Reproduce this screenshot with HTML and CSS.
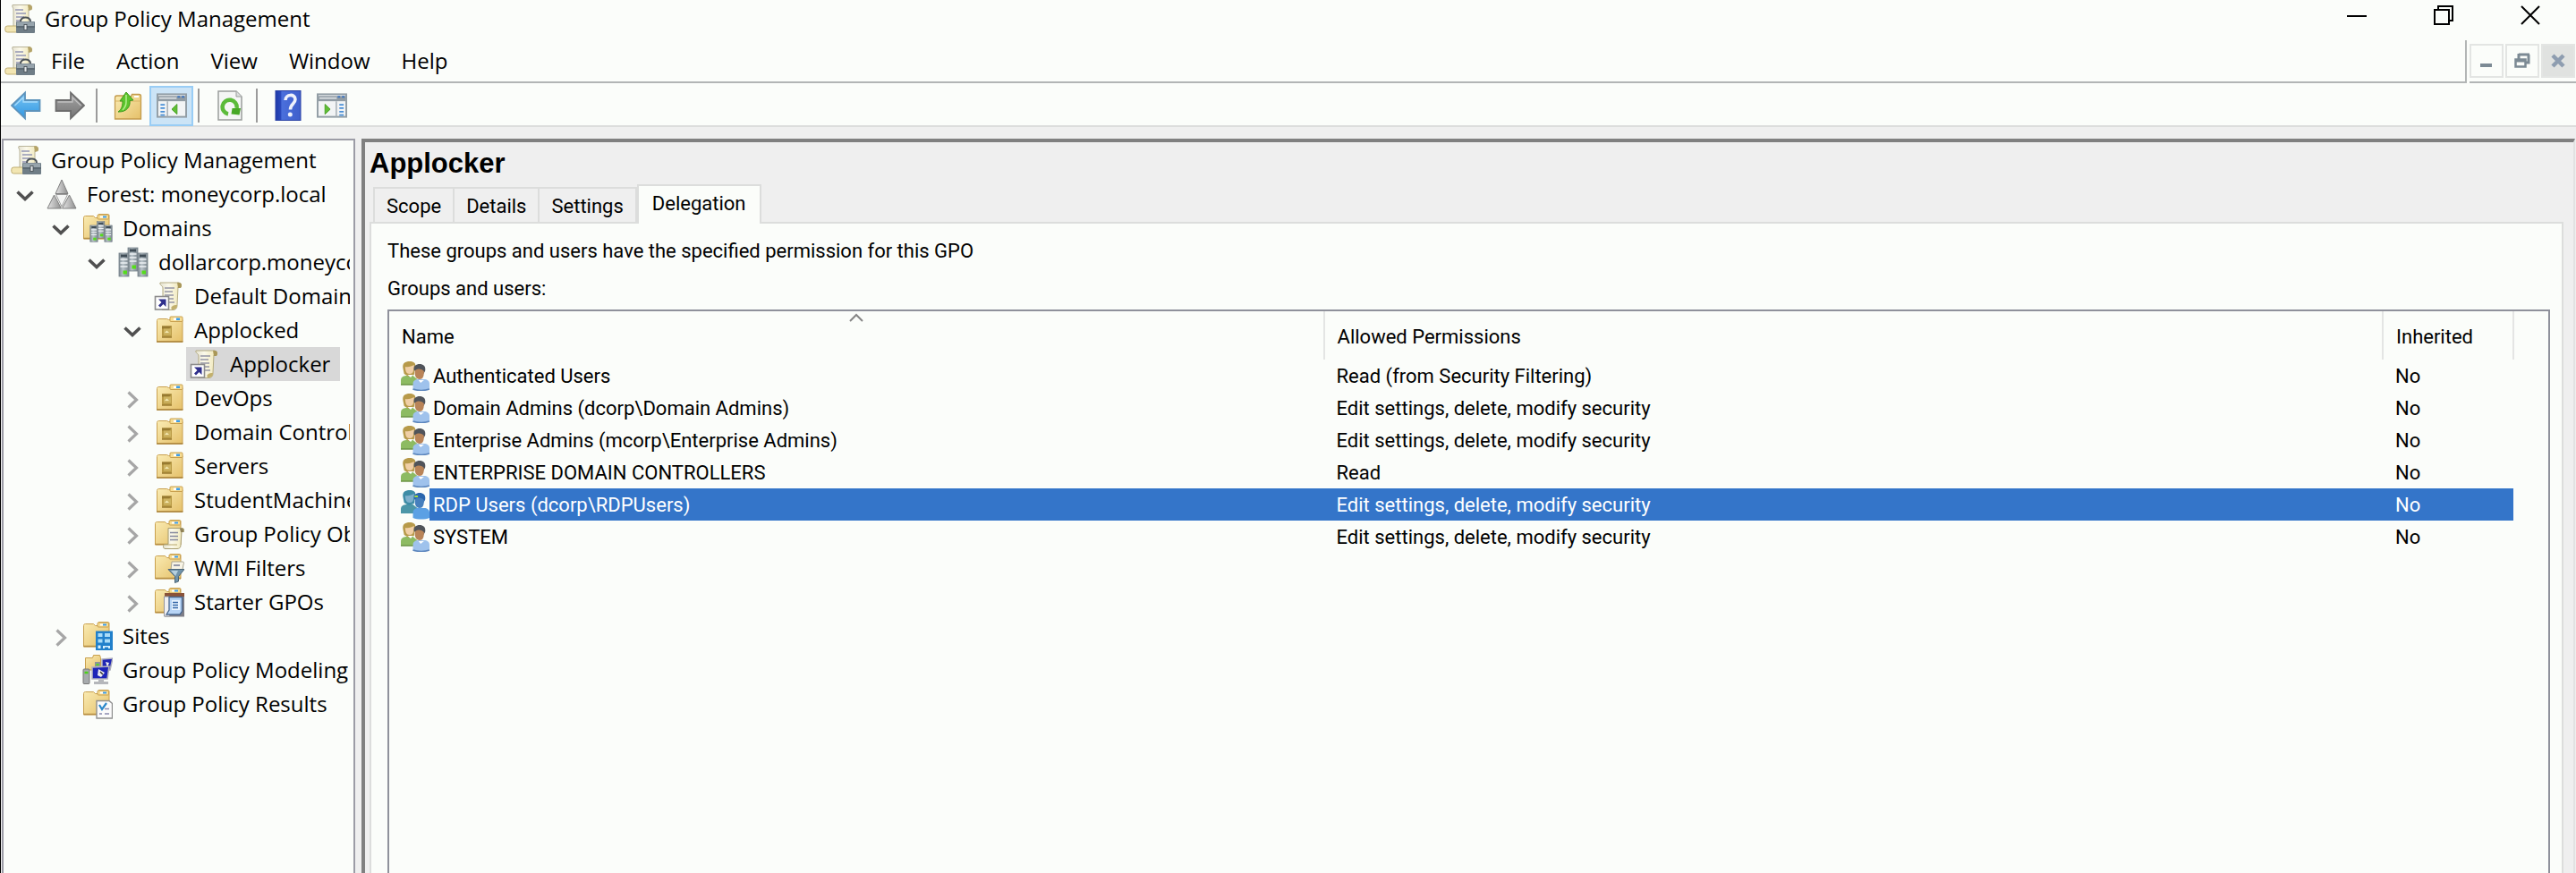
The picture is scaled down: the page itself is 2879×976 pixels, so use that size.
FILE: index.html
```html
<!DOCTYPE html>
<html lang="en">
<head>
<meta charset="utf-8">
<title>Group Policy Management</title>
<link rel="stylesheet" href="styles.css">
</head>
<body>
<svg class="defs" width="0" height="0" aria-hidden="true">
  <defs>
    <linearGradient id="gFolder" x1="0" y1="0" x2="1" y2="1"><stop offset="0" stop-color="#faecb4"/><stop offset="1" stop-color="#e5c069"/></linearGradient>
    <linearGradient id="gPaper" x1="0" y1="0" x2="1" y2="0"><stop offset="0" stop-color="#e6e3d2"/><stop offset=".4" stop-color="#fbf9ea"/><stop offset="1" stop-color="#efe6b4"/></linearGradient>
    <linearGradient id="gServer" x1="0" y1="0" x2="1" y2="0"><stop offset="0" stop-color="#7f8b92"/><stop offset=".4" stop-color="#b9c3c9"/><stop offset="1" stop-color="#7c878e"/></linearGradient>
    <linearGradient id="gBlue" x1="0" y1="0" x2="0" y2="1"><stop offset="0" stop-color="#7cc5f4"/><stop offset="1" stop-color="#2f97e2"/></linearGradient>
    <linearGradient id="gGray" x1="0" y1="0" x2="0" y2="1"><stop offset="0" stop-color="#a5a5a5"/><stop offset="1" stop-color="#747474"/></linearGradient>
    <linearGradient id="gHelp" x1="0" y1="0" x2="1" y2="0"><stop offset="0" stop-color="#1f3aa8"/><stop offset=".2" stop-color="#2a49bd"/><stop offset=".25" stop-color="#4a6fdc"/><stop offset="1" stop-color="#3f5fcb"/></linearGradient>
    <linearGradient id="gTri" x1="0" y1="0" x2="1" y2="0"><stop offset="0" stop-color="#e4e4e4"/><stop offset="1" stop-color="#8f8f8f"/></linearGradient>
  </defs>

  <symbol id="i-console" viewBox="0 0 34 34">
    <path d="M9 1.500h18c3 0 4 2 3 4.500h-3v23H10V7C10 4 8 4 9 1.500z" fill="url(#gPaper)" stroke="#b9b49a"/>
    <path d="M26 1.500c4-1 6 2 4.500 5.500L27 8z" fill="#b5a468"/>
    <path d="M12 7h9M13 11h11M13 15h9M13 19h6" stroke="#9395b4" stroke-width="1.600"/>
    <rect x=".8" y="25" width="16" height="7" rx="2.500" fill="#f2e6b2" stroke="#bfae72"/>
    <path d="M18 20c0-6 11-6 11 0" fill="none" stroke="#4b5257" stroke-width="2"/>
    <rect x="13" y="20" width="21" height="13" rx="1" fill="#6f7d86"/>
    <rect x="14" y="20.500" width="19" height="4.500" fill="#97a4ac"/>
    <path d="M13 26h21" stroke="#4c5860"/>
    <rect x="22" y="23.500" width="3" height="6" fill="#e2e6e8" stroke="#40484e" stroke-width=".8"/>
  </symbol>
  <symbol id="i-forest" viewBox="0 0 34 34">
    <path d="M17 1l7 15.500H10z" fill="url(#gTri)" stroke="#808080"/>
    <path d="M8.500 18l8 15H1z" fill="url(#gTri)" stroke="#808080"/>
    <path d="M25.500 18L33 33H17.500z" fill="url(#gTri)" stroke="#808080"/>
    <path d="M10.500 17.500h13L17 31z" fill="#f4f5f4" stroke="#9a9a9a"/>
  </symbol>
  <symbol id="i-folder" viewBox="0 0 34 34">
    <path d="M1.500 5.500c0-1.500 1-2 2-2h9l2 2h3V3c0-1 .7-1.500 1.500-1.500h9.500c1 0 1.500.7 1.500 1.500v26H1.500z" fill="url(#gFolder)" stroke="#c9a04e"/>
    <rect x="17" y="2" width="12.500" height="5" rx="1" fill="#f7dd93" stroke="#c9a04e"/>
    <rect x="20" y="3.500" width="7" height="2" fill="#fff"/><rect x="23" y="3.500" width="4" height="2" fill="#3c9ce6"/>
    <path d="M1.500 28.500h28.500" stroke="#b78f42" stroke-width="1.500"/>
  </symbol>
  <symbol id="i-ou" viewBox="0 0 34 34">
    <path d="M3.500 6.500c0-1.500 1-2 2-2h9l2 1h15.500v24.500H3.500z" fill="url(#gFolder)" stroke="#c9a04e"/>
    <rect x="18" y="2" width="14" height="5.500" rx="1" fill="#f7dd93" stroke="#c9a04e"/>
    <rect x="22" y="3.500" width="7" height="2.500" fill="#fff"/><rect x="25" y="3.500" width="4" height="2.500" fill="#3c9ce6"/>
    <path d="M3 30h29.500" stroke="#a98238" stroke-width="1.500"/>
    <rect x="9" y="12.500" width="11" height="13" fill="#b99a45"/>
    <path d="M9 12.500h11l-3 3h-8z" fill="#977a30"/>
    <rect x="11" y="15.500" width="8" height="7" fill="#cdb361"/>
    <path d="M12 20l2.500-2.500L17 20z" fill="#f4eab4"/><path d="M9 25h11" stroke="#8b6d27"/>
  </symbol>
  <symbol id="i-servers" viewBox="0 0 34 34">
    <g id="srv3">
      <g id="srv"><rect x="11" y="1" width="11" height="26" fill="url(#gServer)" stroke="#76828a" stroke-width=".8"/><rect x="13" y="2.500" width="7" height="3" fill="#3f4c55"/><path d="M12.500 8h8M12.500 12h8M12.500 16h8" stroke="#edf1f3" stroke-width="1.500"/><rect x="15.500" y="20.500" width="4.500" height="4" fill="#55dc1b"/></g>
      <use href="#srv" x="-10" y="6"/>
      <use href="#srv" x="11" y="6"/>
    </g>
  </symbol>
  <symbol id="i-domains" viewBox="0 0 34 34">
    <use href="#i-folder" width="34" height="34"/>
    <svg x="8" y="9" width="26" height="24" viewBox="0 0 34 34" preserveAspectRatio="none"><use href="#srv3"/></svg>
  </symbol>
  <symbol id="i-scroll" viewBox="0 0 34 34">
    <path d="M7 2h19c4 0 5 2 4 5h-3l-1 20c0 4-2 5.500-5 5.500H9c3-2 1-6 1-9V8C10 5 6 5 7 2z" fill="url(#gPaper)" stroke="#b4ab82"/>
    <path d="M26 2c5-1 6 3 4 6h-3z" fill="#a99758"/>
    <path d="M20 32c-2-3 1-5 6-5 0 4-2 5.500-6 5z" fill="#c2b06d"/>
    <path d="M12 8h11M12 12h9M12 16h10M14 20h8M17 24h6" stroke="#9494a4" stroke-width="1.700"/>
  </symbol>
  <symbol id="i-gpo" viewBox="0 0 34 34">
    <use href="#i-scroll" width="34" height="34"/>
    <rect x="1.500" y="17.500" width="15" height="14.500" fill="#fff" stroke="#8c8c8c" stroke-width="1.600"/>
    <path d="M5 20.500h8.500V29l-3-3-3.500 3.500-2-2L8.500 24z" fill="#2f2f8c"/>
  </symbol>
  <symbol id="i-gpobjects" viewBox="0 0 34 34">
    <use href="#i-folder" width="34" height="34"/>
    <path d="M16 10.500h15c3 0 3 2 2.500 4H31l-1 15c0 3-2 4-4 4H12c-2-1-2-4 0-5h4z" fill="url(#gPaper)" stroke="#a69c70"/>
    <path d="M29 11c4-1 5 1 4 4h-3z" fill="#8f8258"/>
    <path d="M18 15.500h9M18 19.500h9M18 23.500h9" stroke="#85889d" stroke-width="1.700"/><path d="M12 29h14" stroke="#b8a86c"/>
  </symbol>
  <symbol id="i-wmi" viewBox="0 0 34 34">
    <use href="#i-folder" width="34" height="34"/>
    <path d="M20 10h12c2 0 2 2 1 3l-1 6H19z" fill="#f7f4e6" stroke="#aaa692"/><path d="M22 14h7" stroke="#85889d" stroke-width="1.700"/>
    <path d="M16 18.500h18l-6.500 8V32l-4 1.500v-7z" fill="#6f93aa" stroke="#4b6577"/><path d="M19 20h8l-3 6z" fill="#b5d0df"/>
  </symbol>
  <symbol id="i-starter" viewBox="0 0 34 34">
    <use href="#i-folder" width="34" height="34"/>
    <path d="M12 7h22v26.500H12z" fill="#7e7e86"/><path d="M12 7h22v4H12z" fill="#8a5238"/>
    <path d="M11.500 11h6v22h-6z" fill="#f0f0f2" stroke="#96969c"/>
    <path d="M17 11.500h14.500v16L29 31H14l3-5z" fill="#b7d4f5" stroke="#49678f" stroke-width="1.300"/>
    <rect x="20" y="15" width="9" height="11" fill="#eaf4ff"/><path d="M21 17.500h6M21 20.500h6M21 23.500h6" stroke="#3567a8" stroke-width="1.500"/>
  </symbol>
  <symbol id="i-sites" viewBox="0 0 34 34">
    <use href="#i-folder" width="34" height="34"/>
    <rect x="15" y="11.500" width="19" height="21.500" fill="#2180cb"/>
    <path d="M17.500 14h5v4h-5zM25 14h6v4h-6zM17.500 20.500h5v4h-5zM25 20.500h6v4h-6z" fill="#aadcf8"/><path d="M17.500 27.500h3V31h-3zM23 28h8v3h-2v-1.500h-4V31h-2z" fill="#d9f1ff"/>
  </symbol>
  <symbol id="i-modeling" viewBox="0 0 34 34">
    <path d="M3.500 3.500h8l1-3h7l1 3V17h-17z" fill="url(#gFolder)" stroke="#c9a04e"/>
    <path d="M22 5l12-1-3 13-9 1z" fill="#2026b5" stroke="#b0b0bc" stroke-width="1.500"/>
    <path d="M26 8l4 1-2 5z" fill="#eee"/><path d="M14 8h6v7h-6z" fill="#8c9499"/><path d="M15.500 10h3v2h-3z" fill="#55dc1b"/>
    <path d="M11 14l19-1-2 14H11z" fill="#1d24b8" stroke="#b4b4bd" stroke-width="1.600"/>
    <path d="M18 16l7 4-4 5-4-2z" fill="#ececf2"/><path d="M20 19l3 3" stroke="#333" stroke-width="1.500"/>
    <path d="M18 28h6v2h5v3H13v-3h5z" fill="#b5b7bb"/>
    <rect x="1" y="16" width="7" height="16.500" rx="1" fill="#a7abad" stroke="#777"/><path d="M2.500 20h4" stroke="#4cd21a" stroke-width="2.500"/>
  </symbol>
  <symbol id="i-results" viewBox="0 0 34 34">
    <use href="#i-folder" width="34" height="34"/>
    <path d="M16 13.500h14l3.500 3V33H16z" fill="#fbfbfb" stroke="#8f8f8f" stroke-width="1.400"/>
    <path d="M19 18l3 5 5-7" fill="none" stroke="#2b87c9" stroke-width="2.200"/><path d="M25 22.500h5M19 28h3M25 28h5" stroke="#8a8ab0" stroke-width="1.700"/>
  </symbol>

  <symbol id="i-back" viewBox="0 0 34 32">
    <path d="M1 16L16 1.500V10h16.500v12H16v8.500z" fill="url(#gBlue)" stroke="#5d93bb" stroke-width="1.800"/>
    <path d="M4.500 16L14 7v5h16" fill="none" stroke="#a9dcfa" stroke-width="1.300"/>
  </symbol>
  <symbol id="i-forward" viewBox="0 0 34 32">
    <path d="M33 16L18 1.500V10H1.500v12H18v8.500z" fill="url(#gGray)" stroke="#6d6d6d" stroke-width="1.800"/>
    <path d="M3.500 12H20V7l9.500 9" fill="none" stroke="#c0c0c0" stroke-width="1.300"/>
  </symbol>
  <symbol id="i-up" viewBox="0 0 34 34">
    <path d="M2.500 8.500c0-2 1-2.500 2-2.500h8l2 1h6l1-2.500h8c1.500 0 2 .8 2 2V32h-29z" fill="url(#gFolder)" stroke="#c39b4c" stroke-width="1.300"/>
    <path d="M2.500 12h29" stroke="#d9b465"/><path d="M24 7h5" stroke="#fff" stroke-width="2"/>
    <path d="M6 24c3-2 5-5 5-12H8l7-10 8 9-4 .5c1 6-3 13-13 12.500z" fill="#5cc52c" stroke="#3f9a1d"/><path d="M15 5v8c0 4-2 7-4 9" stroke="#b5ee8e" stroke-width="1.500" fill="none"/>
  </symbol>
  <symbol id="i-tree-pane" viewBox="0 0 35 28">
    <rect x="1" y="1" width="33" height="26" fill="#f2f4f5" stroke="#929da5" stroke-width="2"/>
    <path d="M2 3h31v6H2z" fill="#919ca4"/><path d="M3 5.500h20" stroke="#e4e8ea" stroke-width="1.500"/><path d="M24 3h3v2h-3zM29 3h3v2h-3z" fill="#3e74bd"/>
    <path d="M12.500 9v18" stroke="#a3acb2" stroke-width="1.500"/>
    <path d="M4.500 13h5M4.500 17h5M4.500 21h5M4.500 25h5" stroke="#4a8fd6" stroke-width="1.800"/>
    <path d="M23.500 12.500v11.500L17.500 18.300z" fill="#5fbf35" stroke="#479f24"/>
  </symbol>
  <symbol id="i-action-pane" viewBox="0 0 35 28">
    <rect x="1" y="1" width="33" height="26" fill="#f2f4f5" stroke="#929da5" stroke-width="2"/>
    <path d="M2 3h31v6H2z" fill="#919ca4"/><path d="M3 5.500h20" stroke="#e4e8ea" stroke-width="1.500"/><path d="M24 3h3v2h-3zM29 3h3v2h-3z" fill="#3e74bd"/>
    <path d="M22.500 9v18" stroke="#a3acb2" stroke-width="1.500"/>
    <path d="M26 13h5M26 17h5M26 21h5M26 25h5" stroke="#4a8fd6" stroke-width="1.800"/>
    <path d="M9.500 12.500v11.500l6-5.700z" fill="#5fbf35" stroke="#479f24"/>
  </symbol>
  <symbol id="i-refresh" viewBox="0 0 28 34">
    <path d="M1 1h20l6 6v26H1z" fill="#f5f6f5" stroke="#9a9d9c" stroke-width="1.500"/><path d="M21 1v6h6" fill="#dcdfde" stroke="#9a9d9c"/>
    <path d="M12 26.500A8 8 0 1 1 21.500 20" fill="none" stroke="#5cbb3a" stroke-width="4.500"/>
    <path d="M16.500 20h9.500l-1.500 7.500-9-1z" fill="#48a827"/>
  </symbol>
  <symbol id="i-help" viewBox="0 0 29 34">
    <rect x=".5" y=".5" width="28" height="33" fill="url(#gHelp)" stroke="#2a41a5"/>
    <path d="M11.500 11c0-7 11-7.500 11-1 0 5-5.500 5-5.500 11.500" fill="none" stroke="#eef1fb" stroke-width="3.600"/><circle cx="16.800" cy="27" r="2.500" fill="#eef1fb"/>
  </symbol>

  <symbol id="i-users" viewBox="0 0 26 34" preserveAspectRatio="none">
    <path d="M0 27v-5c0-4 3-5 6-5h5l4 4v6z" fill="#8dbb62"/><path d="M0 27h14" stroke="#6c9547" stroke-width="1.500"/>
    <path d="M2 9c-1-6 2-8 6-8s6 2 5 7l-1 8-5 2-4-3z" fill="#b79a4a"/>
    <path d="M4 7c3 1 6-1 8-2 0 7-1 10-4 10S4 12 4 7z" fill="#f0cfa6"/><path d="M6 16l3 3 2-3z" fill="#fff"/>
    <path d="M11 32v-6c0-3 2-5 5-5h5c3 0 5 2 5 5v6c-4 2-11 2-15 0z" fill="#9fc2ec"/><path d="M11 32c4 2 11 2 15 0" fill="none" stroke="#5c86bd" stroke-width="1.500"/>
    <path d="M12 11c-1-5 2-7 5-7s6 2 5 8l-2 4z" fill="#50545a"/>
    <path d="M13 11c3-2 5-2 8 1 0 6-1 9-4 9s-5-4-4-10z" fill="#b98458"/><path d="M16 22l2 3 3-3z" fill="#fff"/>
  </symbol>
  <symbol id="i-users-selected" viewBox="0 0 26 34" preserveAspectRatio="none">
    <path d="M0 27v-5c0-4 3-5 6-5h5l4 4v6z" fill="#4c96a8"/>
    <path d="M2 9c-1-6 2-8 6-8s6 2 5 7l-1 8-5 2-4-3z" fill="#3e8ca6"/>
    <path d="M4 7c3 1 6-1 8-2 0 7-1 10-4 10S4 12 4 7z" fill="#7fb0cc"/>
    <path d="M11 32v-6c0-3 2-5 5-5h5c3 0 5 2 5 5v6c-4 2-11 2-15 0z" fill="#5ba0e4"/>
    <path d="M12 11c-1-5 2-7 5-7s6 2 5 8l-2 4z" fill="#2a66ae"/>
    <path d="M13 11c3-2 5-2 8 1 0 6-1 9-4 9s-5-4-4-10z" fill="#467fbd"/><path d="M12.500 7h3v2h-3z" fill="#a6df3c"/>
  </symbol>
  <symbol id="i-open" viewBox="0 0 20 20"><path d="M1.500 5.500l8.500 8 8.500-8" fill="none" stroke="#505050" stroke-width="3.600"/></symbol>
  <symbol id="i-closed" viewBox="0 0 20 20"><path d="M5.500 1.500l9 8.500-9 8.500" fill="none" stroke="#a6a6a6" stroke-width="3.200"/></symbol>
</svg>

<div class="window">
  <header class="titlebar">
    <svg class="icon"><use href="#i-console"/></svg>
    <h1 class="titlebar-text">Group Policy Management</h1>
    <div class="caption-buttons">
      <button class="caption-button" aria-label="Minimize"><svg viewBox="0 0 22 22"><path d="M0 12h22" stroke="#000" stroke-width="2"/></svg></button>
      <button class="caption-button" aria-label="Restore"><svg viewBox="0 0 22 22"><path d="M5 5V1h16v16h-4M1 5h16v16H1z" fill="none" stroke="#000" stroke-width="2"/></svg></button>
      <button class="caption-button" aria-label="Close"><svg viewBox="0 0 22 22"><path d="M1 1l20 20M21 1L1 21" stroke="#000" stroke-width="2"/></svg></button>
    </div>
  </header>

  <div class="menubar">
    <div class="menus">
      <svg class="icon"><use href="#i-console"/></svg>
      <button class="menu">File</button>
      <button class="menu">Action</button>
      <button class="menu">View</button>
      <button class="menu">Window</button>
      <button class="menu">Help</button>
    </div>
    <div class="child-buttons">
      <button class="child-button" aria-label="Minimize child window"><svg viewBox="0 0 20 20"><path d="M3 15h13" stroke="#7c8a94" stroke-width="4"/></svg></button>
      <button class="child-button" aria-label="Restore child window"><svg viewBox="0 0 20 20"><path d="M6 3h12M17 3v9h-3M6 2v6" fill="none" stroke="#7c8a94" stroke-width="3"/><path d="M2.500 8.500h11v8h-11z" fill="#fbfdfa" stroke="#7c8a94" stroke-width="2.500"/><path d="M2 10h12" stroke="#7c8a94" stroke-width="3"/></svg></button>
      <button class="child-button child-button-close" aria-label="Close child window"><svg viewBox="0 0 20 20"><path d="M4 4l12 12M16 4L4 16" stroke="#8e9db0" stroke-width="4.500"/></svg></button>
    </div>
  </div>

  <div class="toolbar">
    <button class="tool" aria-label="Back"><svg class="icon"><use href="#i-back"/></svg></button>
    <button class="tool" aria-label="Forward"><svg class="icon"><use href="#i-forward"/></svg></button>
    <span class="separator"></span>
    <button class="tool" aria-label="Up one level"><svg class="icon"><use href="#i-up"/></svg></button>
    <button class="tool tool-active" aria-label="Show console tree" aria-pressed="true"><svg class="icon"><use href="#i-tree-pane"/></svg></button>
    <span class="separator"></span>
    <button class="tool" aria-label="Refresh"><svg class="icon"><use href="#i-refresh"/></svg></button>
    <span class="separator"></span>
    <button class="tool" aria-label="Help topics"><svg class="icon"><use href="#i-help"/></svg></button>
    <button class="tool" aria-label="Show action pane"><svg class="icon"><use href="#i-action-pane"/></svg></button>
  </div>

  <div class="workspace">
    <nav class="tree" aria-label="Console tree">
      <div class="node root"><svg class="icon"><use href="#i-console"/></svg><span>Group Policy Management</span></div>
      <ul class="branches">
        <li>
          <div class="node"><button class="toggle" aria-label="Collapse forest"><svg><use href="#i-open"/></svg></button><svg class="icon"><use href="#i-forest"/></svg><span>Forest: moneycorp.local</span></div>
          <ul>
            <li>
              <div class="node"><button class="toggle" aria-label="Collapse domains"><svg><use href="#i-open"/></svg></button><svg class="icon"><use href="#i-domains"/></svg><span>Domains</span></div>
              <ul>
                <li>
                  <div class="node"><button class="toggle" aria-label="Collapse domain"><svg><use href="#i-open"/></svg></button><svg class="icon"><use href="#i-servers"/></svg><span>dollarcorp.moneycorp.local</span></div>
                  <ul>
                    <li><div class="node leaf"><svg class="icon"><use href="#i-gpo"/></svg><span>Default Domain Policy</span></div></li>
                    <li>
                      <div class="node"><button class="toggle" aria-label="Collapse Applocked"><svg><use href="#i-open"/></svg></button><svg class="icon"><use href="#i-ou"/></svg><span>Applocked</span></div>
                      <ul>
                        <li><div class="node leaf"><div class="selected"><svg class="icon"><use href="#i-gpo"/></svg><span>Applocker</span></div></div></li>
                      </ul>
                    </li>
                    <li><div class="node"><button class="toggle" aria-label="Expand DevOps"><svg><use href="#i-closed"/></svg></button><svg class="icon"><use href="#i-ou"/></svg><span>DevOps</span></div></li>
                    <li><div class="node"><button class="toggle" aria-label="Expand Domain Controllers"><svg><use href="#i-closed"/></svg></button><svg class="icon"><use href="#i-ou"/></svg><span>Domain Controllers</span></div></li>
                    <li><div class="node"><button class="toggle" aria-label="Expand Servers"><svg><use href="#i-closed"/></svg></button><svg class="icon"><use href="#i-ou"/></svg><span>Servers</span></div></li>
                    <li><div class="node"><button class="toggle" aria-label="Expand StudentMachines"><svg><use href="#i-closed"/></svg></button><svg class="icon"><use href="#i-ou"/></svg><span>StudentMachines</span></div></li>
                    <li><div class="node"><button class="toggle" aria-label="Expand Group Policy Objects"><svg><use href="#i-closed"/></svg></button><svg class="icon"><use href="#i-gpobjects"/></svg><span>Group Policy Objects</span></div></li>
                    <li><div class="node"><button class="toggle" aria-label="Expand WMI Filters"><svg><use href="#i-closed"/></svg></button><svg class="icon"><use href="#i-wmi"/></svg><span>WMI Filters</span></div></li>
                    <li><div class="node"><button class="toggle" aria-label="Expand Starter GPOs"><svg><use href="#i-closed"/></svg></button><svg class="icon"><use href="#i-starter"/></svg><span>Starter GPOs</span></div></li>
                  </ul>
                </li>
              </ul>
            </li>
            <li><div class="node"><button class="toggle" aria-label="Expand Sites"><svg><use href="#i-closed"/></svg></button><svg class="icon"><use href="#i-sites"/></svg><span>Sites</span></div></li>
            <li><div class="node leaf"><svg class="icon"><use href="#i-modeling"/></svg><span>Group Policy Modeling</span></div></li>
            <li><div class="node leaf"><svg class="icon"><use href="#i-results"/></svg><span>Group Policy Results</span></div></li>
          </ul>
        </li>
      </ul>
    </nav>

    <main class="details">
      <h2 class="details-title">Applocker</h2>
      <div class="tabs" role="tablist">
        <button class="tab" role="tab">Scope</button>
        <button class="tab" role="tab">Details</button>
        <button class="tab" role="tab">Settings</button>
        <button class="tab tab-active" role="tab" aria-selected="true">Delegation</button>
      </div>
      <section class="page" role="tabpanel">
        <p class="line">These groups and users have the specified permission for this GPO</p>
        <p class="line" id="list-label">Groups and users:</p>
        <div class="list">
          <table class="grid" aria-labelledby="list-label">
            <colgroup><col class="col-name"><col><col class="col-inherited"></colgroup>
            <thead>
              <tr>
                <th scope="col" aria-sort="ascending">Name<svg class="sort" viewBox="0 0 16 10"><path d="M1 9l7-7 7 7" fill="none" stroke="#858585" stroke-width="2"/></svg></th>
                <th scope="col">Allowed Permissions</th>
                <th scope="col">Inherited</th>
              </tr>
            </thead>
            <tbody>
              <tr><td><div class="name"><svg><use href="#i-users"/></svg><span>Authenticated Users</span></div></td><td>Read (from Security Filtering)</td><td>No</td></tr>
              <tr><td><div class="name"><svg><use href="#i-users"/></svg><span>Domain Admins (dcorp\Domain Admins)</span></div></td><td>Edit settings, delete, modify security</td><td>No</td></tr>
              <tr><td><div class="name"><svg><use href="#i-users"/></svg><span>Enterprise Admins (mcorp\Enterprise Admins)</span></div></td><td>Edit settings, delete, modify security</td><td>No</td></tr>
              <tr><td><div class="name"><svg><use href="#i-users"/></svg><span>ENTERPRISE DOMAIN CONTROLLERS</span></div></td><td>Read</td><td>No</td></tr>
              <tr class="row-selected"><td><div class="name"><svg><use href="#i-users-selected"/></svg><span>RDP Users (dcorp\RDPUsers)</span></div></td><td>Edit settings, delete, modify security</td><td>No</td></tr>
              <tr><td><div class="name"><svg><use href="#i-users"/></svg><span>SYSTEM</span></div></td><td>Edit settings, delete, modify security</td><td>No</td></tr>
            </tbody>
          </table>
        </div>
      </section>
    </main>
  </div>
</div>
</body>
</html>
```
FILE: styles.css
```css
:root {
  --surface: #fbfdfa;
  --chrome: #efefef;
  --line: #dcdddc;
  --frame: #8f919b;
  --ui: "Open Sans", "Noto Sans", sans-serif;
  --legacy: Roboto, "Liberation Sans", sans-serif;
}

* { box-sizing: border-box; }

body {
  margin: 0;
  background: var(--surface);
  color: #000;
  font-family: var(--ui);
  font-size: 24px;
  line-height: 32px;
}

h1, h2, p, ul { margin: 0; padding: 0; font-weight: 400; }
ul { list-style: none; }

button {
  margin: 0;
  padding: 0;
  border: 0;
  background: none;
  color: inherit;
  font: inherit;
}

.defs { position: absolute; }

.icon { display: block; width: 34px; height: 34px; flex: none; }

.window {
  display: flex;
  flex-direction: column;
  min-height: 100vh;
  border-left: 1px solid #000;
}

/* Title bar */
.titlebar {
  display: flex;
  align-items: center;
  height: 45px;
  padding: 0 40px 4px 4px;
}
.titlebar-text { flex: 1; padding-left: 11px; font-size: 24px; }
.caption-buttons { display: flex; gap: 75px; padding-bottom: 8px; }
.caption-button svg { display: block; width: 22px; height: 22px; }

/* Menu bar */
.menubar { display: flex; gap: 3px; height: 48px; }
.menus {
  display: flex;
  flex: 1;
  gap: 1px;
  align-items: center;
  padding-left: 4px;
  border-right: 2px solid #b2b5b5;
  border-bottom: 2px solid #b2b5b5;
}
.menu { padding: 0 17px; }
.child-buttons {
  display: flex;
  gap: 2px;
  padding: 4px 1px 0 0;
  border-bottom: 2px solid #b2b5b5;
}
.child-button {
  display: grid;
  place-items: center;
  width: 38px;
  height: 38px;
  border: 2px solid #e3e5e3;
}
.child-button svg { width: 20px; height: 20px; }
.child-button-close { background: #e0e2e0; }

/* Toolbar */
.toolbar {
  display: flex;
  align-items: center;
  height: 49px;
  padding: 3px 0 0 3px;
  border-bottom: 2px solid var(--line);
}
.tool {
  display: grid;
  place-items: center;
  width: 49px;
  height: 45px;
}
.tool-active { border: 2px solid #99cdf5; background: #cce4f6; }
.separator {
  width: 2px;
  height: 38px;
  margin: 0 9px 0 5px;
  background: #9b9b9b;
}

/* Panes */
.workspace {
  display: flex;
  flex: 1;
  gap: 7px;
  padding: 13px 1px 0 1px;
  background: var(--chrome);
}
.tree {
  width: 395px;
  flex: none;
  padding: 3px 4px 0 8px;
  border: 2px solid #9c9ca6;
  border-bottom: 0;
  background: var(--surface);
  white-space: nowrap;
}
.branches { overflow: hidden; }
.tree ul ul { padding-left: 40px; }
.node { display: flex; align-items: center; height: 38px; }
.node span { min-width: 0; overflow: hidden; padding-left: 11px; }
.leaf { padding-left: 40px; }
.toggle { width: 32px; margin-right: 8px; flex: none; }
.toggle svg { display: block; width: 20px; height: 20px; margin: 4px auto 0; }
.selected {
  display: flex;
  align-items: center;
  height: 38px;
  margin-left: -4px;
  padding: 0 11px 0 4px;
  background: #d8d8d8;
}

.details {
  display: flex;
  flex: 1;
  flex-direction: column;
  min-width: 0;
  padding: 0 11px 0 5px;
  border: 4px solid #808080;
  border-right: 2px solid #e2e2e2;
  border-bottom: 0;
  font-family: var(--legacy);
  font-size: 22px;
}
.details-title {
  padding-top: 6px;
  font-family: "Liberation Sans", sans-serif;
  font-size: 31px;
  font-weight: 700;
  line-height: 36px;
}

.tabs { display: flex; align-items: flex-end; padding: 5px 0 0 4px; }
.tab {
  height: 39px;
  padding: 2px 13px 0;
  border: 2px solid var(--line);
  border-bottom: 0;
}
.tab + .tab { border-left: 0; }
.tab + .tab-active {
  z-index: 1;
  height: 44px;
  margin-bottom: -2px;
  padding: 0 15px 3px;
  border-left: 2px solid var(--line);
  background: var(--surface);
}

.page {
  display: flex;
  flex: 1;
  flex-direction: column;
  padding: 12px 13px 0 18px;
  border: 2px solid var(--line);
  border-bottom: 0;
  background: var(--surface);
}
.line { height: 42px; line-height: 38px; }

.list {
  flex: 1;
  border: 2px solid var(--frame);
  border-bottom: 0;
}
.grid {
  width: calc(100% - 38px);
  border-collapse: collapse;
  table-layout: fixed;
}
.col-name { width: 44%; }
.col-inherited { width: 146px; }
.grid th {
  position: relative;
  height: 54px;
  padding: 4px 14px 0;
  border-right: 2px solid #e4e5e4;
  font-weight: 400;
  text-align: left;
}
.sort {
  position: absolute;
  top: 2px;
  left: calc(50% - 8px);
  width: 16px;
  height: 10px;
}
.grid td { height: 36px; padding: 2px 14px 0; }
.grid td:first-child { padding: 0 0 0 13px; }
.name { display: flex; align-items: center; height: 36px; }
.name svg { width: 32px; height: 34px; flex: none; }
.name span { flex: 1; height: 36px; padding-left: 4px; line-height: 38px; }
.row-selected td { background: #3475c9; color: #fff; }
.row-selected td:first-child { background: none; }
.row-selected span { background: #3475c9; }
```
